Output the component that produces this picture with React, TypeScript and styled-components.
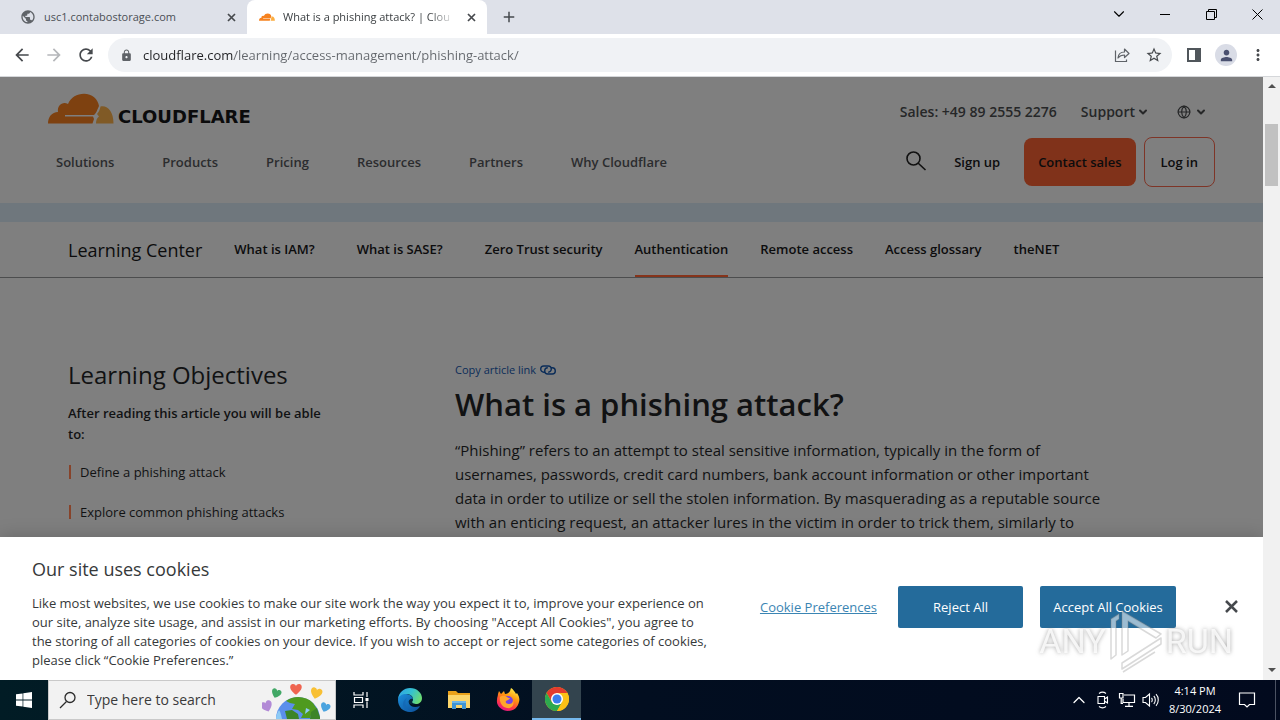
import React from 'react';
import styled, { createGlobalStyle } from 'styled-components';
import {
  MdArrowBack,
  MdArrowForward,
  MdLock,
  MdMoreVert,
  MdPerson,
  MdPublic,
  MdRefresh,
  MdStarBorder,
  MdAdd,
} from 'react-icons/md';
import { ChevronDown, ChevronUp, Globe } from 'lucide-react';

const GlobalStyle = createGlobalStyle`
  *, *::before, *::after { box-sizing: border-box; }
  body { margin: 0; background: #7f7f7f; font-family: "Open Sans", "Noto Sans", sans-serif; }
  button { font-family: inherit; border: 0; padding: 0; background: none; cursor: pointer; }
  input { font-family: inherit; border: 0; padding: 0; background: none; outline: none; }
  a { color: inherit; text-decoration: none; }
  h1, h2, p, ul { margin: 0; padding: 0; font-weight: 400; }
  ul { list-style: none; }
  svg { display: block; flex: none; }
`;

const Desktop = styled.div`
  height: 100vh;
  display: flex;
  flex-direction: column;
  overflow: hidden;
`;

/* ---------- Browser chrome ---------- */

const TabStrip = styled.div`
  flex: none;
  height: 34px;
  display: flex;
  align-items: stretch;
  padding-left: 8px;
  background: #dee1e9;
`;

const Tab = styled.div<{ $active?: boolean }>`
  width: ${(p) => (p.$active ? 240 : 239)}px;
  display: flex;
  align-items: center;
  gap: 8px;
  padding: 0 8px 0 12px;
  border-radius: 8px 8px 0 0;
  background: ${(p) => (p.$active ? '#ffffff' : 'transparent')};
  color: ${(p) => (p.$active ? '#3c4043' : '#4b4f55')};
`;

const TabTitle = styled.span<{ $fade?: boolean }>`
  flex: 1;
  min-width: 0;
  overflow: hidden;
  white-space: nowrap;
  font-size: 11px;
  line-height: 16px;
  ${(p) => p.$fade && 'mask-image: linear-gradient(to right, #000 85%, transparent);'}
`;

const IconButton = styled.button<{ $size?: number }>`
  flex: none;
  width: ${(p) => p.$size ?? 28}px;
  height: ${(p) => p.$size ?? 28}px;
  display: flex;
  align-items: center;
  justify-content: center;
  color: #46494d;
`;

const NewTab = styled(IconButton)`
  align-self: center;
  margin-left: 8px;
`;

const WindowControls = styled.div`
  margin-left: auto;
  display: flex;
`;

const WindowButton = styled.button`
  width: 46px;
  height: 28px;
  display: flex;
  align-items: center;
  justify-content: center;
`;

const Toolbar = styled.div`
  flex: none;
  height: 43px;
  display: flex;
  align-items: center;
  gap: 4px;
  padding: 0 8px;
  background: #ffffff;
  border-bottom: 1px solid #d5d7da;
`;

const AddressBar = styled.div`
  flex: 1;
  height: 34px;
  margin: 0 4px;
  padding: 0 4px 0 12px;
  display: flex;
  align-items: center;
  gap: 4px;
  border-radius: 17px;
  background: #f0f2f5;
  color: #5f6368;
`;

const AddressInput = styled.input`
  flex: 1;
  min-width: 0;
  margin-left: 6px;
  font-size: 13px;
  line-height: 20px;
  color: #5f6368;
  background: linear-gradient(to right, #202124 90px, #63676c 90px);
  background-clip: text;
  -webkit-background-clip: text;
  -webkit-text-fill-color: transparent;
`;

const Avatar = styled.span`
  width: 22px;
  height: 22px;
  display: flex;
  align-items: center;
  justify-content: center;
  border-radius: 50%;
  background: #d9dce6;
  color: #4a5070;
`;

/* ---------- Page ---------- */

const Viewport = styled.div`
  flex: 1;
  min-height: 0;
  display: flex;
`;

const Page = styled.div`
  position: relative;
  flex: 1;
  min-width: 0;
  overflow: hidden;
  background: #7f7f7f;
  color: #111213;
`;

const SiteHeader = styled.header`
  height: 126px;
  padding: 16px 48px 0;
`;

const HeaderRow = styled.div`
  display: flex;
  align-items: center;
  justify-content: space-between;
`;

const LogoLink = styled.a`
  display: flex;
  align-items: flex-end;
  gap: 4px;
  height: 31px;
`;

const LogoWord = styled.span`
  font-family: "DejaVu Sans", sans-serif;
  font-weight: 700;
  font-size: 18px;
  line-height: 14px;
  color: #0b0b0c;
`;

const UtilityNav = styled.div`
  display: flex;
  align-items: center;
  gap: 24px;
  padding: 6px 8px 0 0;
  font-size: 14px;
  font-weight: 600;
  line-height: 20px;
  color: #262728;
`;

const UtilityButton = styled.button<{ $spaced?: boolean }>`
  display: flex;
  align-items: center;
  gap: ${(p) => (p.$spaced ? 4 : 2)}px;
  margin-left: ${(p) => (p.$spaced ? 4 : 0)}px;
  font-size: 14px;
  font-weight: 600;
  line-height: 20px;
  color: #262728;
`;

const MainNav = styled.nav`
  display: flex;
  gap: 48px;
  padding-left: 8px;
  font-size: 13px;
  font-weight: 600;
  line-height: 20px;
  color: #2b2c2e;
`;

const MainRow = styled(HeaderRow)`
  margin-top: 13px;
  height: 50px;
`;

const Actions = styled.div`
  display: flex;
  align-items: center;
  gap: 8px;
`;

const SignUp = styled.a`
  padding: 0 16px;
  font-size: 13px;
  font-weight: 600;
  color: #0c0c0d;
`;

const HeaderButton = styled.button<{ $primary?: boolean }>`
  height: ${(p) => (p.$primary ? 48 : 50)}px;
  padding: 0 ${(p) => (p.$primary ? 14 : 16)}px;
  border-radius: 8px;
  border: ${(p) => (p.$primary ? '0' : '1px solid #7e3527')};
  background: ${(p) => (p.$primary ? '#80321a' : 'transparent')};
  font-size: 13px;
  font-weight: 600;
  color: #0c0c0d;
`;

const Band = styled.div`
  height: 19px;
  background: #6f777d;
`;

const SubNav = styled.nav`
  height: 56px;
  padding-left: 68px;
  display: flex;
  align-items: stretch;
  gap: 32px;
  border-bottom: 1px solid #4c4d4e;
`;

const SubNavTitle = styled.a`
  font-size: 18px;
  font-weight: 500;
  line-height: 57px;
  color: #0c0c0d;
  white-space: nowrap;
`;

const SubNavLink = styled.a<{ $active?: boolean; $wide?: boolean }>`
  margin-right: ${(p) => (p.$wide ? 10 : 0)}px;
  border-bottom: 2px solid ${(p) => (p.$active ? '#86341b' : 'transparent')};
  font-size: 13px;
  font-weight: 600;
  line-height: 54px;
  color: #0c0c0d;
  white-space: nowrap;
`;

const Article = styled.main`
  display: grid;
  grid-template-columns: 275px minmax(0, 656px);
  column-gap: 112px;
  padding: 78px 68px 0;
`;

const ObjectivesTitle = styled.h2`
  margin-top: 4px;
  font-size: 24px;
  font-weight: 500;
  line-height: 30px;
`;

const ObjectivesLead = styled.p`
  max-width: 264px;
  margin: 13px 0 17px;
  font-size: 13px;
  font-weight: 600;
  line-height: 21px;
`;

const Objective = styled.li`
  display: flex;
  align-items: center;
  gap: 9px;
  margin-bottom: 20px;
  padding-left: 1px;
  font-size: 13px;
  line-height: 20px;

  &::before {
    content: "";
    width: 2px;
    height: 14px;
    background: #87432a;
  }
`;

const CopyLink = styled.a`
  display: flex;
  align-items: center;
  gap: 4px;
  padding-top: 6px;
  font-size: 11px;
  line-height: 16px;
  color: #0b2d59;
`;

const Title = styled.h1`
  margin: 4px 0 12px;
  font-size: 31px;
  font-weight: 600;
  line-height: 44px;
`;

const Body = styled.p`
  font-size: 15px;
  line-height: 24px;
  white-space: nowrap;
`;

/* ---------- Cookie banner ---------- */

const Banner = styled.section`
  position: absolute;
  left: 0;
  right: 0;
  bottom: 0;
  display: flex;
  align-items: center;
  padding: 20px 24px 10px 32px;
  background: #ffffff;
  box-shadow: 0 0 18px rgba(0, 0, 0, 0.2);
  color: #36393a;
`;

const BannerCopy = styled.div`
  flex: 1;
`;

const BannerTitle = styled.h2`
  margin-bottom: 12px;
  font-size: 18px;
  font-weight: 500;
  line-height: 25px;
`;

const BannerText = styled.p`
  font-size: 13px;
  line-height: 19px;
  white-space: nowrap;
`;

const BannerActions = styled.div`
  display: flex;
  align-items: center;
  gap: 17px;
  margin-bottom: 14px;
`;

const PreferencesLink = styled.button`
  margin-right: 4px;
  font-size: 13px;
  line-height: 20px;
  color: #3b85b3;
  text-decoration: underline;
  white-space: nowrap;
`;

const BannerButton = styled.button<{ $width: number }>`
  width: ${(p) => p.$width}px;
  height: 42px;
  border-radius: 2px;
  background: #246b9b;
  font-size: 13px;
  color: #ffffff;
`;

const CloseBanner = styled(IconButton)`
  margin-left: 30px;
`;

/* ---------- Scrollbar ---------- */

const ScrollTrack = styled.div`
  flex: none;
  width: 17px;
  display: flex;
  flex-direction: column;
  align-items: center;
  padding: 7px 0;
  background: #f1f1f1;
`;

const ScrollThumb = styled.div`
  width: 13px;
  height: 62px;
  margin: 35px 0 auto;
  background: #c1c1c1;
`;

/* ---------- Watermark ---------- */

const Watermark = styled.div`
  position: fixed;
  right: 47px;
  bottom: 46px;
  display: flex;
  align-items: center;
  gap: 2px;
  font-family: Roboto, sans-serif;
  font-size: 34px;
  line-height: 66px;
  color: rgba(255, 255, 255, 0.8);
  text-shadow: 0 0 4px rgba(110, 110, 110, 0.6);
  pointer-events: none;
`;

/* ---------- Taskbar ---------- */

const Taskbar = styled.div`
  flex: none;
  height: 40px;
  display: flex;
  background: linear-gradient(to right, #011c25, #020e20 50%, #020a1e);
  color: #ffffff;
`;

const TaskButton = styled.button<{ $active?: boolean; $width?: number }>`
  width: ${(p) => p.$width ?? 49}px;
  display: flex;
  align-items: center;
  justify-content: center;
  background: ${(p) => (p.$active ? '#33444e' : 'transparent')};
  border-bottom: ${(p) => (p.$active ? '2px solid #76b9ed' : '0')};
  color: inherit;
`;

const SearchBox = styled.label`
  width: 288px;
  display: flex;
  align-items: center;
  padding-left: 10px;
  border: 1px solid #c9c9c9;
  background: #f2f2f2;
  color: #2b2b2b;
`;

const SearchInput = styled.input`
  flex: 1;
  min-width: 0;
  margin-left: 10px;
  font-size: 14px;
  line-height: 20px;
  color: #2b2b2b;

  &::placeholder { color: #3a3a3a; opacity: 1; }
`;

const Tray = styled.div`
  margin-left: auto;
  display: flex;
  align-items: center;
`;

const TrayButton = styled.button<{ $width?: number }>`
  width: ${(p) => p.$width ?? 24}px;
  height: 40px;
  display: flex;
  align-items: center;
  justify-content: center;
  color: #ffffff;
`;

const Clock = styled.button`
  width: 64px;
  font-size: 11px;
  line-height: 18px;
  color: #ffffff;
  text-align: center;
`;

const Notifications = styled(TrayButton)`
  padding-right: 8px;
`;

const ShowDesktop = styled.div`
  width: 5px;
  height: 40px;
  border-left: 1px solid #4b5262;
`;

/* ---------- Drawings ---------- */

function CloudMark({ width, back, front }: { width: number; back: string; front: string }) {
  return (
    <svg width={width} height={Math.round((width * 31) / 66)} viewBox="0 0 66 31">
      <path fill={front} d="M0 30.500C0 24 4 19 10 19 9 12 15 8 20 11 23 4 29 .7 36 .7 44 .7 50 6 51 13 49 17 49 19 46 22H17v1.500h28l1 2.500-1.500 4.500z" />
      <path fill={back} d="M48 30.500c0-3.500 1-5.500 3-7L49 21c2-2 3-5 3.500-7.500 7.500-1.500 13 5.500 13 17z" />
    </svg>
  );
}

function Cross({ size, weight }: { size: number; weight: number }) {
  return (
    <svg width={size} height={size} viewBox={`0 0 ${size} ${size}`} stroke="currentColor" strokeWidth={weight}>
      <path d={`M1 1L${size - 1} ${size - 1}M${size - 1} 1L1 ${size - 1}`} />
    </svg>
  );
}

function ShareIcon() {
  return (
    <svg width="16" height="16" viewBox="0 0 16 16" fill="none" stroke="#5f6368" strokeWidth="1.2">
      <path d="M1.500 3.500v11h11v-2" />
      <path d="M4 11c.3-4 3-6 6.500-6V2l4.500 4.500-4.500 4V8C7.500 8 5.500 9 4 11z" strokeLinejoin="round" />
    </svg>
  );
}

function LinkIcon() {
  return (
    <svg width="16" height="10" viewBox="0 0 16 10" fill="none" stroke="#0b2d59" strokeWidth="1.400">
      <path d="M5 7.200H3.800a3 3 0 0 1 0-6.200h4.400a3 3 0 0 1 0 6.200" />
      <path d="M11 2.800h1.200a3 3 0 0 1 0 6.200H7.800a3 3 0 0 1 0-6.200" />
    </svg>
  );
}

function SearchGlyph({ flip }: { flip?: boolean }) {
  return flip ? (
    <svg width="18" height="18" viewBox="0 0 18 18" fill="none" stroke="currentColor" strokeWidth="1.300">
      <circle cx="11" cy="6.500" r="5" />
      <path d="M7.500 10.500L1 17" />
    </svg>
  ) : (
    <svg width="22" height="22" viewBox="0 0 22 22" fill="none" stroke="#111" strokeWidth="1.600">
      <circle cx="8.500" cy="7.500" r="6.500" />
      <path d="M13 12l7.500 7" />
    </svg>
  );
}

function HeartsGlobe() {
  const heart = 'M0 4C-7-1-5-5-2.500-5-1-5 0-4 0-3 0-4 1-5 2.500-5 5-5 7-1 0 4z';
  return (
    <svg width="73" height="38" viewBox="0 0 73 38">
      <circle cx="36" cy="38" r="22" fill="#5b8fec" />
      <path fill="#4f9a1f" d="M24 20c8-6 20-5 27 2l4 6-5 3-2 6h-9l2-4-5-4-6-1 3-5-5-1z" />
      <path fill="#3c8428" d="M49 31l6-4 3 9v2H48zM23 30l7-1 6 4 1 5H25z" />
      <path fill="#8ecbf5" d="M17 29c-2 3-3 6-3 9h6c-1-4-1-6-3-9zM44 27l4 2-5 4z" />
      <path d={heart} transform="translate(34 9) scale(1.200)" fill="#ef6450" />
      <path d={heart} transform="translate(14 13) rotate(20)" fill="#42a866" />
      <path d={heart} transform="translate(54 13) rotate(15) scale(1.200)" fill="#f8c034" />
      <path d={heart} transform="translate(5 26) rotate(-20) scale(1.200)" fill="#b28ad6" />
      <path d={heart} transform="translate(63 27) rotate(20)" fill="#4aa3df" />
    </svg>
  );
}

function TaskViewIcon() {
  return (
    <svg width="18" height="18" viewBox="0 0 18 18" fill="none" stroke="#fff" strokeWidth="1.200">
      <path d="M2 1v3h9V1M2 17v-3h9v3M2.500 6.500h8v5h-8zM15 1v5M15 10.500V17" />
      <path d="M13.500 7h3v3h-3z" fill="#fff" stroke="none" />
    </svg>
  );
}

function EdgeIcon() {
  return (
    <svg width="24" height="24" viewBox="0 0 24 24">
      <defs>
        <linearGradient id="edgeTop" x1="0" y1=".2" x2="1" y2=".6">
          <stop offset="0" stopColor="#2fa5e6" />
          <stop offset=".5" stopColor="#35c1d0" />
          <stop offset="1" stopColor="#6ddc70" />
        </linearGradient>
        <linearGradient id="edgeBase" x1="0" y1="0" x2="1" y2="1">
          <stop offset="0" stopColor="#1c8fdc" />
          <stop offset="1" stopColor="#0c4d96" />
        </linearGradient>
      </defs>
      <path fill="url(#edgeBase)" d="M0 12C0 7 4 5 8 6c5 0 8 4 7 7-2-2-5-1-4 2 1 4 6 5 11 3-2 4-6 6-10 6C5 24 0 19 0 12z" />
      <path fill="url(#edgeTop)" d="M0 11C1 4 6 0 12 0c7 0 12 5 12 10 0 4-3 6-6 6-2 0-4-1-4-2 0-1 1-1 1-3 0-3-3-5-7-5-4 0-7 2-8 5z" />
      <path fill="#1467b3" d="M9 10c-3 4-2 10 4 14-5 0-8-4-8-8 0-3 2-5 4-6z" opacity=".7" />
      <path fill="#04263c" d="M15 11c0 2-1 2-1 3 0 1 1 2 3 2-3 1-5 0-6-1-1-3 2-5 4-4z" />
    </svg>
  );
}

function FolderIcon() {
  return (
    <svg width="22" height="20" viewBox="0 0 22 20">
      <path fill="#e9a11b" d="M0 1h8l2 2h12v6H0z" />
      <path fill="#fbd56b" d="M0 5h22v13H0z" />
      <path fill="#3f94d4" d="M4 11h14v8h-4v-4H8v4H4z" />
      <path fill="#6db6e8" d="M4 11h14v2H4z" />
    </svg>
  );
}

function FirefoxIcon() {
  return (
    <svg width="24" height="24" viewBox="0 0 24 24">
      <defs>
        <linearGradient id="fox" x1=".8" y1="0" x2=".3" y2="1">
          <stop offset="0" stopColor="#fff44f" />
          <stop offset=".4" stopColor="#ff980e" />
          <stop offset=".75" stopColor="#ff3647" />
          <stop offset="1" stopColor="#e31587" />
        </linearGradient>
      </defs>
      <path fill="url(#fox)" d="M2 6l1-3 2 3 3-3 1 3c2 0 4-1 5-3l1-3c2 1 4 4 5 6l1-1c2 3 3 6 2 9-1 5-5 9-11 9S0 18 1 12c0-3 1-4 1-6z" />
      <circle cx="12" cy="13" r="5" fill="#7542e5" />
      <path fill="#ffa62b" d="M4 9c3-2 5-1 7 0 1 1 2 1 3 1-1 2-3 2-4 3-1 2 1 3 3 3 2 0 4-1 4-4 2 5-2 9-6 8-5-1-8-6-7-11z" />
    </svg>
  );
}

function ChromeIcon() {
  return (
    <svg width="24" height="24" viewBox="0 0 24 24">
      <circle cx="12" cy="12" r="12" fill="#fbc116" />
      <path fill="#e33b2e" d="M1.600 6A12 12 0 0 1 22.400 6H12L6.800 15z" />
      <path fill="#2da94f" d="M1.600 6A12 12 0 0 0 12 24l5.200-9-5.200 3-5.200-3z" />
      <path fill="#fbc116" d="M12 6h10.400A12 12 0 0 1 12 24l5.200-9z" />
      <circle cx="12" cy="12" r="6" fill="#fff" />
      <circle cx="12" cy="12" r="4.500" fill="#3b7ded" />
    </svg>
  );
}

function WindowsIcon() {
  return (
    <svg width="16" height="16" viewBox="0 0 16 16" fill="#fff">
      <path d="M0 2.300L6.600 1.400v6.200H0zM7.300 1.300L16 0v7.600H7.300zM0 8.400h6.600v6.200L0 13.700zM7.300 8.400H16V16l-8.700-1.300z" />
    </svg>
  );
}

function MeetNowIcon() {
  return (
    <svg width="14" height="18" viewBox="0 0 14 18" fill="none" stroke="#fff" strokeWidth="1.100">
      <path d="M2 5.500h6.500v7H2zM8.500 8l3-2v6l-3-2M3 2.500c2-1.500 5-1.500 7 0M3 15.500c2 1.500 5 1.500 7 0" />
    </svg>
  );
}

function NetworkIcon() {
  return (
    <svg width="18" height="16" viewBox="0 0 18 16" fill="none" stroke="#fff" strokeWidth="1.200">
      <path d="M6 3h10.500v7.500H5V7M11 10.500V14M7 14.400h8M1.500 1.500H5V6H1.500zM3.200 6v5.500H5" />
    </svg>
  );
}

function VolumeIcon() {
  return (
    <svg width="18" height="16" viewBox="0 0 18 16" fill="none" stroke="#fff" strokeWidth="1.100">
      <path d="M1 5.500h2.500L7.500 2v12l-4-3.500H1zM9.500 6c1 1 1 3 0 4M11.800 4c2 2 2 6 0 8M14 2.200c3 3 3 8.600 0 11.600" />
    </svg>
  );
}

function ActionCenterIcon() {
  return (
    <svg width="18" height="18" viewBox="0 0 18 18" fill="none" stroke="#fff" strokeWidth="1.200">
      <path d="M1.500 2h15v11.500h-5L9 16l-2.500-2.500h-5z" />
    </svg>
  );
}

function PlayMark() {
  return (
    <svg width="56" height="64" viewBox="0 0 56 64" fill="rgba(255,255,255,.55)" stroke="rgba(130,130,130,.3)" strokeWidth="1.500" strokeLinejoin="round">
      <path d="M3 50V10l8-5v5l-3 2v34z" />
      <path d="M14 46V2l39 23-5 4-28-17v30z" />
      <path d="M14 54l39-25v6L14 60zM15 63l32-20" />
    </svg>
  );
}

function Arrow({ down }: { down?: boolean }) {
  return (
    <svg width="8" height="5" viewBox="0 0 8 5" fill="#505050">
      <path d={down ? 'M0 0h8L4 4z' : 'M0 4h8L4 0z'} />
    </svg>
  );
}

/* ---------- Content ---------- */

const mainLinks = ['Solutions', 'Products', 'Pricing', 'Resources', 'Partners', 'Why Cloudflare'];

const subLinks = [
  { label: 'What is IAM?', wide: true },
  { label: 'What is SASE?', wide: true },
  { label: 'Zero Trust security' },
  { label: 'Authentication', active: true },
  { label: 'Remote access' },
  { label: 'Access glossary' },
  { label: 'theNET' },
];

const bodyLines = [
  '“Phishing” refers to an attempt to steal sensitive information, typically in the form of',
  'usernames, passwords, credit card numbers, bank account information or other important',
  'data in order to utilize or sell the stolen information. By masquerading as a reputable source',
  'with an enticing request, an attacker lures in the victim in order to trick them, similarly to',
];

const cookieLines = [
  'Like most websites, we use cookies to make our site work the way you expect it to, improve your experience on',
  'our site, analyze site usage, and assist in our marketing efforts. By choosing "Accept All Cookies", you agree to',
  'the storing of all categories of cookies on your device. If you wish to accept or reject some categories of cookies,',
  'please click “Cookie Preferences.”',
];

function Lines({ lines }: { lines: string[] }) {
  return (
    <>
      {lines.map((line) => (
        <React.Fragment key={line}>
          {line}
          <br />
        </React.Fragment>
      ))}
    </>
  );
}

export default function App() {
  return (
    <Desktop>
      <GlobalStyle />
      <TabStrip>
        <Tab>
          <MdPublic size={16} color="#5f6368" />
          <TabTitle>usc1.contabostorage.com</TabTitle>
          <IconButton $size={16} aria-label="Close tab"><Cross size={9} weight={1.7} /></IconButton>
        </Tab>
        <Tab $active>
          <CloudMark width={16} front="#f6821f" back="#fbad41" />
          <TabTitle $fade>What is a phishing attack? | Clou</TabTitle>
          <IconButton $size={16} aria-label="Close tab"><Cross size={9} weight={1.7} /></IconButton>
        </Tab>
        <NewTab aria-label="New tab"><MdAdd size={18} /></NewTab>
        <WindowControls>
          <WindowButton aria-label="Search tabs"><ChevronDown size={18} strokeWidth={1.5} /></WindowButton>
          <WindowButton aria-label="Minimize">
            <svg width="10" height="10" viewBox="0 0 10 10"><path d="M0 5.500h10" stroke="#000" /></svg>
          </WindowButton>
          <WindowButton aria-label="Restore">
            <svg width="11" height="11" viewBox="0 0 11 11" fill="none" stroke="#000"><path d="M.5 2.500h8v8h-8zM2.500 2.500v-2h8v8h-2" /></svg>
          </WindowButton>
          <WindowButton aria-label="Close window">
            <svg width="11" height="11" viewBox="0 0 11 11" stroke="#000"><path d="M.5.5l10 10M10.500.5l-10 10" /></svg>
          </WindowButton>
        </WindowControls>
      </TabStrip>

      <Toolbar>
        <IconButton aria-label="Back"><MdArrowBack size={20} /></IconButton>
        <IconButton aria-label="Forward"><MdArrowForward size={20} color="#b5b7ba" /></IconButton>
        <IconButton aria-label="Reload"><MdRefresh size={20} /></IconButton>
        <AddressBar>
          <MdLock size={13} />
          <AddressInput aria-label="Address" defaultValue="cloudflare.com/learning/access-management/phishing-attack/" />
          <IconButton aria-label="Share"><ShareIcon /></IconButton>
          <IconButton aria-label="Bookmark"><MdStarBorder size={18} /></IconButton>
        </AddressBar>
        <IconButton aria-label="Side panel">
          <svg width="14" height="14" viewBox="0 0 14 14"><path fill="#50565b" d="M0 0h14v14H0zM2 2v10h6V2z" fillRule="evenodd" /></svg>
        </IconButton>
        <IconButton aria-label="Profile" $size={28}><Avatar><MdPerson size={17} /></Avatar></IconButton>
        <IconButton aria-label="Menu"><MdMoreVert size={18} /></IconButton>
      </Toolbar>

      <Viewport>
        <Page>
          <SiteHeader>
            <HeaderRow>
              <LogoLink href="#" aria-label="Cloudflare home">
                <CloudMark width={66} front="#7e4110" back="#805a26" />
                <LogoWord>CLOUDFLARE</LogoWord>
              </LogoLink>
              <UtilityNav>
                <a href="#sales">Sales: +49 89 2555 2276</a>
                <UtilityButton>Support <ChevronDown size={12} strokeWidth={4} /></UtilityButton>
                <UtilityButton $spaced aria-label="Language"><Globe size={14} /><ChevronDown size={12} strokeWidth={4} /></UtilityButton>
              </UtilityNav>
            </HeaderRow>
            <MainRow>
              <MainNav>
                {mainLinks.map((label) => <a href="#" key={label}>{label}</a>)}
              </MainNav>
              <Actions>
                <IconButton aria-label="Search"><SearchGlyph /></IconButton>
                <SignUp href="#signup">Sign up</SignUp>
                <HeaderButton $primary>Contact sales</HeaderButton>
                <HeaderButton>Log in</HeaderButton>
              </Actions>
            </MainRow>
          </SiteHeader>
          <Band />
          <SubNav>
            <SubNavTitle href="#learning">Learning Center</SubNavTitle>
            {subLinks.map((link) => (
              <SubNavLink href="#" key={link.label} $active={link.active} $wide={link.wide}>{link.label}</SubNavLink>
            ))}
          </SubNav>
          <Article>
            <aside>
              <ObjectivesTitle>Learning Objectives</ObjectivesTitle>
              <ObjectivesLead>After reading this article you will be able to:</ObjectivesLead>
              <ul>
                <Objective>Define a phishing attack</Objective>
                <Objective>Explore common phishing attacks</Objective>
              </ul>
            </aside>
            <article>
              <CopyLink href="#copy">Copy article link <LinkIcon /></CopyLink>
              <Title>What is a phishing attack?</Title>
              <Body><Lines lines={bodyLines} /></Body>
            </article>
          </Article>
          <Banner aria-label="Cookie consent">
            <BannerCopy>
              <BannerTitle>Our site uses cookies</BannerTitle>
              <BannerText><Lines lines={cookieLines} /></BannerText>
            </BannerCopy>
            <BannerActions>
              <PreferencesLink>Cookie Preferences</PreferencesLink>
              <BannerButton $width={125}>Reject All</BannerButton>
              <BannerButton $width={136}>Accept All Cookies</BannerButton>
              <CloseBanner $size={16} aria-label="Close"><Cross size={13} weight={2.5} /></CloseBanner>
            </BannerActions>
          </Banner>
        </Page>
        <ScrollTrack>
          <Arrow />
          <ScrollThumb />
          <Arrow down />
        </ScrollTrack>
      </Viewport>

      <Taskbar>
        <TaskButton $width={48} aria-label="Start"><WindowsIcon /></TaskButton>
        <SearchBox>
          <SearchGlyph flip />
          <SearchInput aria-label="Search" placeholder="Type here to search" />
          <HeartsGlobe />
        </SearchBox>
        <TaskButton aria-label="Task view"><TaskViewIcon /></TaskButton>
        <TaskButton aria-label="Edge"><EdgeIcon /></TaskButton>
        <TaskButton aria-label="File Explorer"><FolderIcon /></TaskButton>
        <TaskButton aria-label="Firefox"><FirefoxIcon /></TaskButton>
        <TaskButton $active aria-label="Chrome"><ChromeIcon /></TaskButton>
        <Tray>
          <TrayButton aria-label="Show hidden icons"><ChevronUp size={20} strokeWidth={1.5} /></TrayButton>
          <TrayButton aria-label="Meet now"><MeetNowIcon /></TrayButton>
          <TrayButton aria-label="Network"><NetworkIcon /></TrayButton>
          <TrayButton aria-label="Volume"><VolumeIcon /></TrayButton>
          <Clock>4:14 PM<br />8/30/2024</Clock>
          <Notifications $width={48} aria-label="Notifications"><ActionCenterIcon /></Notifications>
          <ShowDesktop />
        </Tray>
      </Taskbar>
      <Watermark><span>ANY</span><PlayMark /><span>RUN</span></Watermark>
    </Desktop>
  );
}
